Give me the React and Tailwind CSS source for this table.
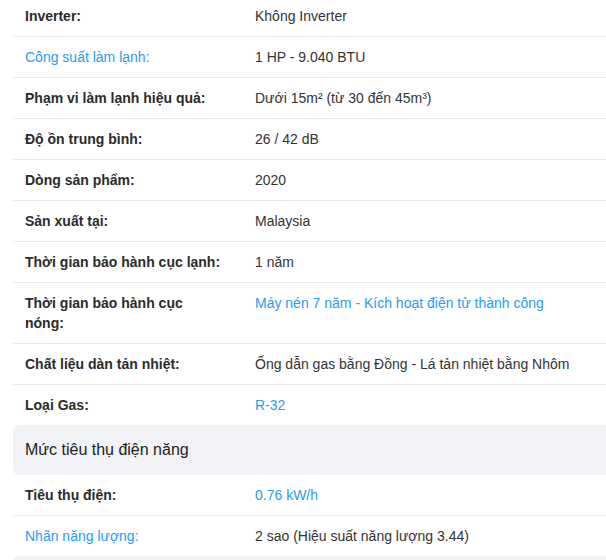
import React from "react";

const rows1 = [
  { l: "Inverter:", v: "Không Inverter" },
  { l: "Công suất làm lạnh:", v: "1 HP - 9.040 BTU", ll: true },
  { l: "Phạm vi làm lạnh hiệu quả:", v: "Dưới 15m² (từ 30 đến 45m³)" },
  { l: "Độ ồn trung bình:", v: "26 / 42 dB" },
  { l: "Dòng sản phẩm:", v: "2020" },
  { l: "Sản xuất tại:", v: "Malaysia" },
  { l: "Thời gian bảo hành cục lạnh:", v: "1 năm" },
  { l: "Thời gian bảo hành cục nóng:", v: "Máy nén 7 năm - Kích hoạt điện tử thành công", vl: true },
  { l: "Chất liệu dàn tản nhiệt:", v: "Ống dẫn gas bằng Đồng - Lá tản nhiệt bằng Nhôm" },
  { l: "Loại Gas:", v: "R-32", vl: true, last: true },
];

const rows2 = [
  { l: "Tiêu thụ điện:", v: "0.76 kW/h", vl: true },
  { l: "Nhãn năng lượng:", v: "2 sao (Hiệu suất năng lượng 3.44)", ll: true, last: true },
];

function Row({ r }) {
  return (
    <div className={"flex py-[10px] text-[14px] leading-[20px] " + (r.last ? "" : "border-b border-[#e9e9ec]")}>
      <div className="w-[242px] shrink-0 pl-[12px]">
        <div
          className={
            "max-w-[197px] " +
            (r.ll ? "text-[#2a9bf2] font-normal" : "text-[#2b2b2b] font-bold")
          }
        >
          {r.l}
        </div>
      </div>
      <div className={r.vl ? "text-[#2a9bf2]" : "text-[#333333]"}>{r.v}</div>
    </div>
  );
}

export default function App() {
  return (
    <div className="w-[606px] h-[560px] overflow-hidden bg-white" style={{ fontFamily: '"Liberation Sans", Arial, sans-serif' }}>
      <div className="ml-[13px] w-[610px] -mt-[4px]">
        {rows1.map((r, i) => (
          <Row key={i} r={r} />
        ))}
        <div className="h-[50px] flex items-center px-[12px] bg-[#f2f3f7] rounded-[6px] text-[16px] text-[#222222]">
          Mức tiêu thụ điện năng
        </div>
        {rows2.map((r, i) => (
          <Row key={i} r={r} />
        ))}
        <div className="h-[50px] bg-[#f2f3f7] rounded-[6px]" />
      </div>
    </div>
  );
}
